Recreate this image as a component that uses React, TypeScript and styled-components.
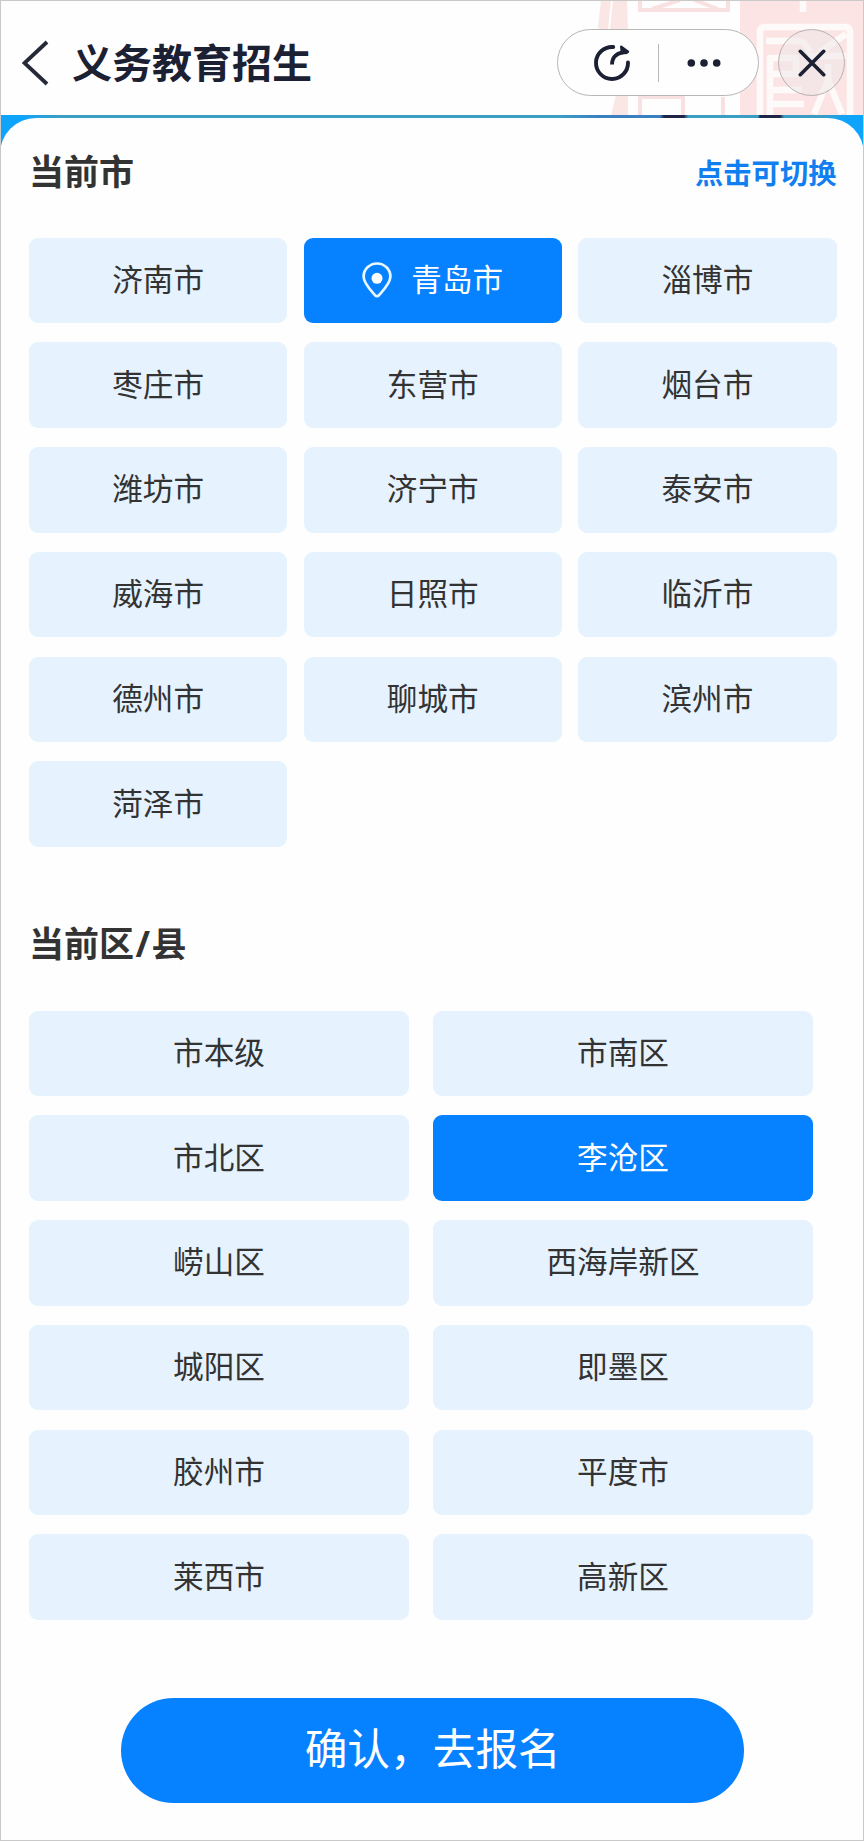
import React, { useState } from "react";
import styled, { createGlobalStyle } from "styled-components";

const GlobalStyle = createGlobalStyle`
  * { box-sizing: border-box; }
  body { margin: 0; background: #fefefe; }
  button { font: inherit; border: 0; padding: 0; cursor: pointer; }
`;

const Page = styled.div`
  width: 864px;
  height: 1841px;
  overflow: hidden;
  display: flex;
  flex-direction: column;
  background: #0fa4fb;
  font-family: "Noto Sans CJK SC", sans-serif;
  color: #333;
  position: relative;
`;

const Frame = styled.div`
  position: absolute;
  inset: 0;
  border: 1px solid #c9c9c9;
  pointer-events: none;
`;

const Header = styled.header`
  height: 115px;
  flex: none;
  position: relative;
  display: flex;
  align-items: center;
  padding: 10px 19px 0 22px;
  background: #fefefe;
`;

const SealPattern = styled.svg`
  position: absolute;
  right: 0;
  top: 0;
`;

const Back = styled.button`
  display: flex;
  background: none;
`;

const Title = styled.h1`
  margin: 0 0 4px 23px;
  font-size: 40px;
  line-height: 56px;
  font-weight: 700;
  color: #1c2033;
  flex: 1;
`;

const Capsule = styled.div`
  position: relative;
  display: flex;
  align-items: center;
  width: 202px;
  height: 67px;
  margin-right: 19px;
  border: 1px solid #b9b6b8;
  border-radius: 34px;
  background: #fefefe;
`;

const CapsuleButton = styled.button<{ $left?: number; $right?: number }>`
  flex: 1;
  display: flex;
  justify-content: center;
  padding: 0 ${(p) => p.$right ?? 0}px 0 ${(p) => p.$left ?? 0}px;
  background: none;
`;

const Divider = styled.span`
  width: 1px;
  height: 38px;
  background: #b8b8b8;
`;

const Close = styled.button`
  position: relative;
  width: 67px;
  height: 67px;
  display: flex;
  align-items: center;
  justify-content: center;
  border: 1px solid #b9b0b2;
  border-radius: 50%;
  background: rgba(240, 232, 234, 0.6);
`;

const BannerEdge = styled.div`
  height: 3px;
  flex: none;
  background: linear-gradient(90deg, #0fa4fb 0 20px, #3a9dc4 60px 560px, #3a7fc0 600px 660px, #1f2547 664px 684px, #3a9dc4 688px 758px, #1f2547 760px 780px, #3a9dc4 784px 820px, #0fa4fb 850px);
`;

const Sheet = styled.main`
  flex: 1;
  display: flex;
  flex-direction: column;
  padding: 27px 27.5px 0 29px;
  border-radius: 36px 36px 0 0;
  background: #fefefe;
`;

const SectionHead = styled.div<{ $top?: number }>`
  display: flex;
  align-items: center;
  justify-content: space-between;
  height: 52px;
  margin-top: ${(p) => p.$top ?? 0}px;
`;

const SectionTitle = styled.h2`
  margin: 0 0 2px;
  font-size: 35px;
  line-height: 52px;
  font-weight: 700;
  color: #333;
`;

const Slash = styled.span`
  font-family: "Noto Sans", sans-serif;
  margin: 0 1.5px;
`;

const SwitchHint = styled.span`
  padding-top: 1px;
  font-size: 28.3px;
  font-weight: 700;
  color: #127ff0;
`;

const Grid = styled.div<{ $columns: number; $gap: number; $inset?: number }>`
  display: grid;
  grid-template-columns: repeat(${(p) => p.$columns}, 1fr);
  grid-auto-rows: 85.5px;
  gap: 19.25px ${(p) => p.$gap}px;
  margin-top: 40.5px;
  margin-right: ${(p) => p.$inset ?? 0}px;
`;

const Option = styled.button<{ $active: boolean }>`
  display: flex;
  align-items: center;
  justify-content: center;
  gap: 19px;
  padding: 0 0 5px;
  border-radius: 9px;
  font-size: 30.6px;
  color: ${(p) => (p.$active ? "#fff" : "#333")};
  background: ${(p) => (p.$active ? "#0681ff" : "#e6f2fe")};
`;

const PinIcon = styled.svg`
  margin-top: 4px;
`;

const Confirm = styled.button`
  align-self: center;
  width: 623px;
  height: 105px;
  margin-top: 78px;
  border-radius: 53px;
  font-size: 42.7px;
  line-height: 96px;
  padding-bottom: 9px;
  color: #fff;
  background: #0681ff;
`;

const Pin = () => (
  <PinIcon width="30" height="36" viewBox="0 0 30 36" fill="none">
    <path
      d="M15 34.200C14.200 34.200 13.600 33.800 13 33.200C9.500 29.300 1.600 21.500 1.600 14.600A13.400 13.100 0 0 1 28.400 14.600C28.400 21.500 20.500 29.300 17 33.200C16.400 33.800 15.800 34.200 15 34.200Z"
      stroke="#e8f8ff"
      strokeWidth="2.700"
    />
    <circle cx="15" cy="16.300" r="5.500" fill="#fff" />
  </PinIcon>
);

const Seal = () => (
  <SealPattern width="274" height="115" viewBox="590 0 274 115" fill="none">
    <path d="M601 0H627L628 30V115H611L616 95V30L608 31L598 28Z" fill="#fae6e5" />
    <path d="M612 0 609 30" stroke="#fefefe" strokeWidth="2" />
    <g stroke="#fae1e1" strokeWidth="4">
      <path d="M640 0V10H728V0M652 9 680 0M718 9 694 0" />
      <path d="M640 115V97H683V115M723 97V115" />
    </g>
    <path d="M740 0H864V115H740Z" fill="#fbe4e3" />
    <g stroke="#fefafa" strokeWidth="6.500" strokeLinejoin="round">
      <path d="M803 0V12" />
      <path d="M760 115V32Q760 27 765 27H845Q850 27 850 32V115" />
      <path d="M766 41H798Q805 41 810 52M770 115V58H796V74H772" />
      <path d="M772 90H802M770 104H804" />
      <path d="M846 34 820 52M808 56H846M828 64V80M814 114 828 80 842 114" />
    </g>
  </SealPattern>
);

const cities = ["济南市", "青岛市", "淄博市", "枣庄市", "东营市", "烟台市", "潍坊市", "济宁市", "泰安市", "威海市", "日照市", "临沂市", "德州市", "聊城市", "滨州市", "菏泽市"];
const districts = ["市本级", "市南区", "市北区", "李沧区", "崂山区", "西海岸新区", "城阳区", "即墨区", "胶州市", "平度市", "莱西市", "高新区"];

export default function App() {
  const [city, setCity] = useState("青岛市");
  const [district, setDistrict] = useState("李沧区");
  return (
    <Page>
      <GlobalStyle />
      <Header>
        <Seal />
        <Back aria-label="返回">
          <svg width="27" height="46" viewBox="0 0 27 46" fill="none">
            <path d="M25 2 2.500 23 25 44" stroke="#262a38" strokeWidth="3.800" />
          </svg>
        </Back>
        <Title>义务教育招生</Title>
        <Capsule>
          <CapsuleButton $left={8} aria-label="刷新">
            <svg width="38" height="38" viewBox="0 0 38 38" fill="none" stroke="#1c2033" strokeWidth="3.900" strokeLinecap="round">
              <path d="M20.200 3A16 16 0 1 0 35 18.500" />
              <path d="M19 20.500C19 12.500 24.500 8 34.500 8" strokeLinecap="butt" />
              <path d="M28.200 2.800 35 7.800 29 9Z" fill="#1c2033" strokeWidth="2.400" strokeLinejoin="round" />
            </svg>
          </CapsuleButton>
          <Divider />
          <CapsuleButton $right={8} aria-label="更多">
            <svg width="34" height="8" viewBox="0 0 34 8" fill="#1c2033">
              <circle cx="4.300" cy="4" r="3.800" />
              <circle cx="17" cy="4" r="3.800" />
              <circle cx="29.700" cy="4" r="3.800" />
            </svg>
          </CapsuleButton>
        </Capsule>
        <Close aria-label="关闭">
          <svg width="28" height="28" viewBox="0 0 28 28" stroke="#1c2033" strokeWidth="3.600" strokeLinecap="round">
            <path d="M2.300 2.300 25.700 25.700M25.700 2.300 2.300 25.700" />
          </svg>
        </Close>
      </Header>
      <BannerEdge />
      <Sheet>
        <SectionHead>
          <SectionTitle>当前市</SectionTitle>
          <SwitchHint>点击可切换</SwitchHint>
        </SectionHead>
        <Grid $columns={3} $gap={16.3}>
          {cities.map((name) => (
            <Option key={name} $active={name === city} onClick={() => setCity(name)}>
              {name === city && <Pin />}
              {name}
            </Option>
          ))}
        </Grid>
        <SectionHead $top={71.3}>
          <SectionTitle>
            当前区<Slash>/</Slash>县
          </SectionTitle>
        </SectionHead>
        <Grid $columns={2} $gap={24} $inset={23.5}>
          {districts.map((name) => (
            <Option key={name} $active={name === district} onClick={() => setDistrict(name)}>
              {name}
            </Option>
          ))}
        </Grid>
        <Confirm>确认，去报名</Confirm>
      </Sheet>
      <Frame />
    </Page>
  );
}
